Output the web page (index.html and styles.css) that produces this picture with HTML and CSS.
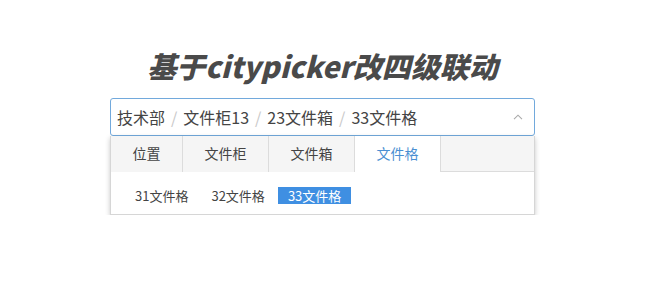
FILE: index.html
```html
<!DOCTYPE html>
<html lang="zh-CN">
<head>
<meta charset="utf-8">
<title>citypicker</title>
<link rel="stylesheet" href="styles.css">
</head>
<body>
<div class="wrap">
  <h1 class="title">基于citypicker改四级联动</h1>
  <div class="picker">
    <div class="input">
      <span class="seg">技术部</span><span class="sep">/</span><span class="seg">文件柜13</span><span class="sep">/</span><span class="seg">23文件箱</span><span class="sep">/</span><span class="seg">33文件格</span>
      <svg class="caret" width="10" height="6" viewBox="0 0 10 6"><path d="M1 5.2 L5 1.2 L9 5.2" fill="none" stroke="#a9a9a9" stroke-width="1.1"/></svg>
    </div>
    <div class="panel">
      <div class="tabs">
        <div class="tab">位置</div>
        <div class="tab">文件柜</div>
        <div class="tab">文件箱</div>
        <div class="tab active">文件格</div>
      </div>
      <div class="items">
        <span class="item">31文件格</span>
        <span class="item">32文件格</span>
        <span class="item selected">33文件格</span>
      </div>
    </div>
  </div>
</div>
</body>
</html>
```
FILE: styles.css
```css
html, body {
  margin: 0;
  padding: 0;
  background: #fff;
}
body {
  padding-right: 5px;
  font-family: "Noto Sans CJK SC", "Noto Sans", sans-serif;
  color: #333;
}
.wrap {
  width: 425px;
  margin: 0 auto;
  padding-top: 51px;
}
.title {
  margin: 0 -40px;
  font-size: 29px;
  line-height: 29px;
  font-weight: 900;
  font-style: italic;
  color: #4a4a4a;
  text-align: center;
}
.picker {
  margin-top: 18px;
}
.input {
  box-sizing: border-box;
  height: 38px;
  border: 1px solid #72a9dc;
  border-radius: 3px;
  display: flex;
  align-items: center;
  padding: 0 6px;
  font-size: 16px;
  color: #444;
}
.sep {
  color: #c8c8c8;
  margin: 0 6px;
}
.caret {
  margin-left: auto;
  margin-right: 5px;
}
.panel {
  border: 1px solid #d6d6d6;
  border-top: none;
  background: #fff;
  box-shadow: 0 2px 5px rgba(0, 0, 0, 0.22);
}
.tabs {
  display: flex;
  background: #f5f5f5;
  border-bottom: 1px solid #dcdcdc;
  height: 35px;
}
.tab {
  height: 36px;
  box-sizing: border-box;
  padding: 0 21.5px;
  line-height: 35px;
  font-size: 14px;
  color: #444;
  border-right: 1px solid #dcdcdc;
  background: #f5f5f5;
}
.tab.active {
  background: #fff;
  color: #4a8fd2;
}
.items {
  display: flex;
  gap: 3px;
  padding: 15px 14px 10px;
}
.item {
  font-size: 13px;
  line-height: 17px;
  padding: 0 10px;
  color: #444;
}
.item.selected {
  background: #3f8fe2;
  color: #fff;
}
```
